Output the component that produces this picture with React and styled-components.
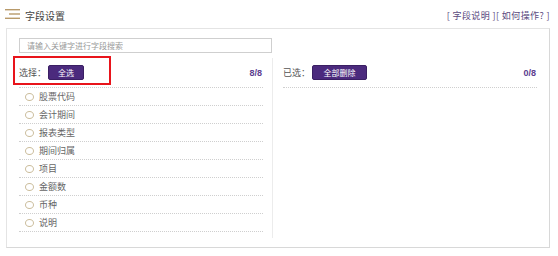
import React from "react"
import styled, { createGlobalStyle } from "styled-components"

const Global = createGlobalStyle`
  body {
    margin: 0;
    background: #fff;
    font-family: "Noto Sans CJK SC", "Liberation Sans", sans-serif;
  }
`

const Page = styled.div`
  width: 558px;
  height: 256px;
`

const TopBar = styled.div`
  height: 28px;
  display: flex;
  align-items: center;
  padding: 0 8px 0 5px;
`

const Title = styled.div`
  margin-left: 5px;
  font-size: 10px;
  color: #444;
  flex: 1;
  margin-top: 2px;
`

const Links = styled.div`
  font-size: 9px;
  letter-spacing: 0.4px;
  color: #5a4a80;
  margin-top: 2px;
  white-space: pre;
`

const Panel = styled.div`
  margin: 0 8px 0 6px;
  height: 220px;
  box-sizing: border-box;
  border: 1px solid #e4e4e4;
  border-right-color: #d8d8d8;
  border-bottom-color: #d8d8d8;
  padding: 9px 12px 0 12px;
`

const Search = styled.input`
  display: block;
  width: 253px;
  height: 15px;
  box-sizing: border-box;
  border: 1px solid #cfcfcf;
  padding: 0 7px;
  font-family: inherit;
  font-size: 8px;
  outline: none;
  &::placeholder {
    color: #999;
  }
`

const Columns = styled.div`
  display: grid;
  grid-template-columns: 253px 1fr;
  margin-top: 5px;
`

const Column = styled.div`
  padding-right: ${p => (p.$left ? "9px" : "0")};
  padding-left: ${p => (p.$left ? "0" : "10px")};
  border-left: ${p => (p.$left ? "none" : "1px solid #ececec")};
  height: 180px;
`

const ColHead = styled.div`
  position: relative;
  height: 30px;
  display: flex;
  align-items: center;
  border-bottom: 1px dotted #cfcfcf;
  box-sizing: border-box;
`

const Label = styled.span`
  font-size: 9px;
  color: #555;
`

const Btn = styled.button`
  height: 15px;
  width: ${p => p.$w}px;
  margin-left: 2px;
  background: #4b2a7d;
  border: 1px solid #3a1f63;
  border-radius: 2px;
  color: #fff;
  font-family: inherit;
  font-size: 8px;
  padding: 0;
  line-height: 13px;
`

const Count = styled.span`
  margin-left: auto;
  margin-right: 1px;
  font-size: 9px;
  font-weight: bold;
  color: #5b3d8f;
  font-family: "Liberation Sans", sans-serif;
`

const Mark = styled.div`
  position: absolute;
  left: -6px;
  top: -2px;
  width: 98px;
  height: 29px;
  box-sizing: border-box;
  border: 2px solid #e8141b;
`

const Row = styled.div`
  height: 18px;
  box-sizing: border-box;
  border-bottom: 1px dotted #cfcfcf;
  display: flex;
  align-items: center;
  padding-left: 6px;
`

const Radio = styled.span`
  width: 7px;
  height: 6px;
  border: 1px solid #cbbd9c;
  border-radius: 50%;
  margin-right: 5px;
`

const ItemText = styled.span`
  font-size: 9px;
  color: #666;
`

const MenuIcon = () => (
  <svg width="15" height="10" viewBox="0 0 15 10">
    <rect x="0" y="0" width="15" height="1.4" fill="#b89a6a" />
    <rect x="4" y="4.3" width="11" height="1.4" fill="#b89a6a" />
    <rect x="0" y="8.6" width="15" height="1.4" fill="#b89a6a" />
  </svg>
)

const fields = ["股票代码", "会计期间", "报表类型", "期间归属", "项目", "金额数", "币种", "说明"]

const App = () => {
  return (
    <Page>
      <Global />
      <TopBar>
        <MenuIcon />
        <Title>字段设置</Title>
        <Links>[ 字段说明 ][ 如何操作? ]</Links>
      </TopBar>
      <Panel>
        <Search placeholder="请输入关键字进行字段搜索" />
        <Columns>
          <Column $left>
            <ColHead>
              <Mark />
              <Label>选择：</Label>
              <Btn $w={36}>全选</Btn>
              <Count>8/8</Count>
            </ColHead>
            {fields.map(f => (
              <Row key={f}>
                <Radio />
                <ItemText>{f}</ItemText>
              </Row>
            ))}
          </Column>
          <Column>
            <ColHead>
              <Label>已选：</Label>
              <Btn $w={55}>全部删除</Btn>
              <Count>0/8</Count>
            </ColHead>
          </Column>
        </Columns>
      </Panel>
    </Page>
  )
}

export default App
